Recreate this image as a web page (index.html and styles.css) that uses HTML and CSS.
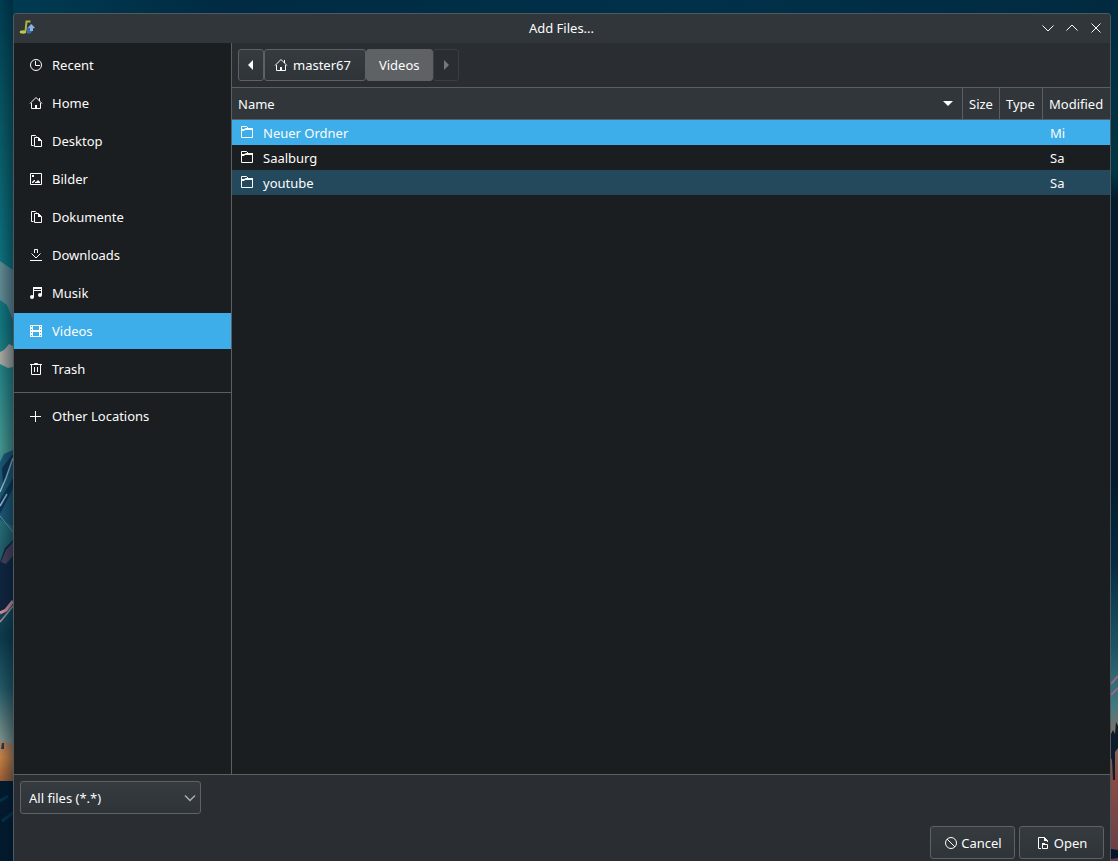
FILE: index.html
```html
<!DOCTYPE html>
<html lang="en">
<head>
<meta charset="utf-8">
<title>Add Files...</title>
<link rel="stylesheet" href="styles.css">
</head>
<body>
<svg class="wallpaper wallpaper-left" viewBox="0 0 13 861" preserveAspectRatio="none" aria-hidden="true">
  <defs>
    <linearGradient id="sky" x1="0" y1="0" x2="0" y2="1">
      <stop offset="0" stop-color="#003c52"/><stop offset=".12" stop-color="#07535f"/><stop offset=".3" stop-color="#0d6f7b"/>
      <stop offset=".38" stop-color="#12757d"/><stop offset=".52" stop-color="#44948c"/><stop offset=".56" stop-color="#2f7f86"/>
      <stop offset=".66" stop-color="#1d5664"/><stop offset=".74" stop-color="#0d3a4c"/><stop offset=".8" stop-color="#245965"/><stop offset=".86" stop-color="#7c918b"/>
    </linearGradient>
    <linearGradient id="shade" x1="0" y1="0" x2="1" y2="0">
      <stop offset="0" stop-color="#001522" stop-opacity="0"/><stop offset="1" stop-color="#001522" stop-opacity=".4"/>
    </linearGradient>
    <linearGradient id="sand" x1="0" y1="0" x2="0" y2="1">
      <stop offset="0" stop-color="#a87c62"/><stop offset=".4" stop-color="#c67f42"/><stop offset="1" stop-color="#9a5d38"/>
    </linearGradient>
  </defs>
  <path fill="url(#sky)" d="M0 0h13v861H0z"/>
  <path fill="#5f8790" d="M0 261l13 9v50l-6-15-7-5z"/>
  <path fill="#a6a5a0" d="M0 352l4-2 5-6 4 2v21l-5 1-8-4z"/>
  <path fill="#1b5672" d="M0 462l4-8 9-4v76l-13-6z"/>
  <path fill="#0b3355" d="M2 468l11-14v8L3 486zM0 500l13-22v10L0 514z"/>
  <path stroke="#94b5c2" stroke-width="1.5" fill="none" d="M0 492l6-14 7-20M0 506l7-12"/>
  <path stroke="#6197a0" fill="none" d="M0 516l13 16"/>
  <path fill="#10243f" d="M0 562l5-14 8-8v62l-13 12z"/>
  <path fill="#494059" d="M1 562l5-12 7-8v14l-7 8z"/>
  <path stroke="#d58f9e" stroke-width="3" fill="none" d="M0 613l6-3 7-9"/>
  <path stroke="#a991a0" stroke-width="1.5" fill="none" d="M0 622l5-6 8-10"/>
  <path fill="url(#sand)" d="M0 741l13 3v38H0z"/>
  <path fill="#22384b" d="M2 743h2v6H1z"/>
  <path fill="#031a2e" d="M0 781h13v80H0z"/>
  <path stroke="#07304b" stroke-width="3" fill="none" d="M0 801l8-5M2 821l11-8"/>
  <path fill="url(#shade)" d="M0 0h13v861H0z"/>
</svg>
<svg class="wallpaper wallpaper-right" viewBox="0 0 7 861" preserveAspectRatio="none" aria-hidden="true">
  <defs>
    <linearGradient id="dusk" x1="0" y1="0" x2="0" y2="1">
      <stop offset="0" stop-color="#012a40"/><stop offset=".2" stop-color="#013644"/><stop offset=".23" stop-color="#041b2c"/>
      <stop offset=".55" stop-color="#04192b"/><stop offset=".65" stop-color="#06293f"/><stop offset=".75" stop-color="#195465"/>
      <stop offset=".82" stop-color="#417a7f"/><stop offset=".85" stop-color="#7e7168"/><stop offset=".9" stop-color="#8a4d42"/><stop offset="1" stop-color="#693d48"/>
    </linearGradient>
  </defs>
  <path fill="url(#dusk)" d="M0 0h7v861H0z"/>
  <path stroke="#8c6c86" stroke-width="2" fill="none" d="M0 684l7-8M0 695l7-7"/>
  <path fill="#0e1b2b" d="M0 734l2-4 2 4 1-12 2 4v22l-3 4v28H2l-1-20-1-2z"/>
  <path fill="#07152a" d="M0 849l7 1v8l-7 1z"/>
</svg>

<main class="window">
  <header class="titlebar">
    <svg class="app-icon" viewBox="0 0 16 16" aria-hidden="true">
      <path fill="#3a69a5" d="M8 8l5-4 3 4-2 1-1 3-3 2-2-1z"/>
      <path fill="#8db2df" d="M9 8l3-4 4 4h-2v3h-3V8z"/>
      <path d="M11.500 1.500H7.500l-1 9.500" fill="none" stroke="#adb63d" stroke-width="2"/>
      <ellipse cx="4" cy="12" rx="3.300" ry="1.700" fill="#bdc64c"/>
    </svg>
    <h1 class="title">Add Files...</h1>
    <div class="window-controls">
      <button class="window-button" aria-label="Minimize"><svg viewBox="0 0 16 16"><path d="M2.500 5.500L8 11l5.500-5.500"/></svg></button>
      <button class="window-button" aria-label="Maximize"><svg viewBox="0 0 16 16"><path d="M2.500 10.500L8 5l5.500 5.500"/></svg></button>
      <button class="window-button" aria-label="Close"><svg viewBox="0 0 16 16"><path d="M3.500 3.500l9 9M12.500 3.500l-9 9"/></svg></button>
    </div>
  </header>

  <div class="browser">
    <nav class="places" aria-label="Places">
      <a class="place" href="#recent"><svg class="icon" viewBox="0 0 16 16"><circle cx="8" cy="8" r="5.500"/><path d="M7.500 4v4.500H12"/></svg>Recent</a>
      <a class="place" href="#home"><svg class="icon" viewBox="0 0 16 16"><path d="M2 8.500L8 2.500l6 6M3.500 8v5.500h9V8M11.500 3v3"/><path class="solid" d="M7 10h2v4H7z"/></svg>Home</a>
      <a class="place" href="#desktop"><svg class="icon" viewBox="0 0 16 16"><path d="M5.500 12.500h-2v-10h4l1 1M6.500 4.500h4l3 3v6h-7z"/><path class="solid" d="M10 4l4 4h-4z"/></svg>Desktop</a>
      <a class="place" href="#bilder"><svg class="icon" viewBox="0 0 16 16"><path d="M2.500 2.500h11v11h-11z"/><path class="solid" d="M4 4h2v2H4zM4 12v-1l2-2h1v1l-2 2zM7 12v-1h1l2-2 2 2v1z"/></svg>Bilder</a>
      <a class="place" href="#dokumente"><svg class="icon" viewBox="0 0 16 16"><path d="M5.500 12.500h-2v-10h4l1 1M6.500 4.500h4l3 3v6h-7z"/><path class="solid" d="M10 4l4 4h-4z"/></svg>Dokumente</a>
      <a class="place" href="#downloads"><svg class="icon" viewBox="0 0 16 16"><path d="M2 13.500h12M6.500 6V2.500h3V6M3.500 6.500L8 11l4.500-4.500"/></svg>Downloads</a>
      <a class="place" href="#musik"><svg class="icon" viewBox="0 0 16 16"><path d="M5.500 12V2.500h8V10M5.500 5.500h8"/><path class="solid" d="M5 2h9v2H5z"/><circle class="solid" cx="4" cy="12" r="2"/><circle class="solid" cx="12" cy="10" r="2"/></svg>Musik</a>
      <a class="place selected" href="#videos" aria-current="page"><svg class="icon" viewBox="0 0 16 16"><path class="solid" fill-rule="evenodd" d="M2 2h12v12H2zM5 3v4h6V3zM5 9v4h6V9zM3 3v1h1V3zM3 6v1h1V6zM3 9v1h1V9zM3 12v1h1v-1zM12 3v1h1V3zM12 6v1h1V6zM12 9v1h1V9zM12 12v1h1v-1z"/></svg>Videos</a>
      <a class="place" href="#trash"><svg class="icon" viewBox="0 0 16 16"><path d="M2 3.500h12M6.500 3V2.500h3V3M3.500 4v9.500h9V4M6.500 6v5M9.500 6v5"/></svg>Trash</a>
      <hr class="divider">
      <a class="place" href="#other"><svg class="icon" viewBox="0 0 16 16"><path d="M2 8.500h11M7.500 3v11"/></svg>Other Locations</a>
    </nav>

    <section class="content">
      <div class="pathbar">
        <button class="crumb arrow" aria-label="Back"><svg viewBox="0 0 16 16"><path class="solid" d="M10 3v10L5 8z"/></svg></button>
        <button class="crumb"><svg class="icon" viewBox="0 0 16 16"><path d="M2 8.500L8 2.500l6 6M3.500 8v5.500h9V8M11.500 3v3"/><path class="solid" d="M7 10h2v4H7z"/></svg>master67</button>
        <button class="crumb current">Videos</button>
        <button class="crumb arrow" aria-label="Forward" disabled><svg viewBox="0 0 16 16"><path class="solid" d="M6 3v10l5-5z"/></svg></button>
      </div>
      <table class="files">
        <colgroup><col><col class="col-size"><col class="col-type"><col class="col-modified"></colgroup>
        <thead>
          <tr>
            <th aria-sort="ascending"><span class="sort">Name<svg class="sort-icon" viewBox="0 0 16 16"><path class="solid" d="M3 5h10l-5 5z"/></svg></span></th>
            <th>Size</th><th>Type</th><th>Modified</th>
          </tr>
        </thead>
        <tbody>
          <tr class="selected"><td><span class="file"><svg class="icon" viewBox="0 0 16 16"><path d="M2.500 13.500v-11h5l2 2h4v9z"/><path class="solid" d="M2 5h3l2-1h7v2H6L5 7H2z"/></svg>Neuer Ordner</span></td><td></td><td></td><td>Mi</td></tr>
          <tr><td><span class="file"><svg class="icon" viewBox="0 0 16 16"><path d="M2.500 13.500v-11h5l2 2h4v9z"/><path class="solid" d="M2 5h3l2-1h7v2H6L5 7H2z"/></svg>Saalburg</span></td><td></td><td></td><td>Sa</td></tr>
          <tr class="hovered"><td><span class="file"><svg class="icon" viewBox="0 0 16 16"><path d="M2.500 13.500v-11h5l2 2h4v9z"/><path class="solid" d="M2 5h3l2-1h7v2H6L5 7H2z"/></svg>youtube</span></td><td></td><td></td><td>Sa</td></tr>
        </tbody>
      </table>
    </section>
  </div>

  <footer class="footer">
    <div class="filter">
      <select class="filter-select" aria-label="File type"><option>All files (*.*)</option></select>
      <svg class="filter-arrow" viewBox="0 0 16 16" aria-hidden="true"><path d="M3 5.500l5 5 5-5"/></svg>
    </div>
    <div class="actions">
      <button class="action"><svg class="icon" viewBox="0 0 16 16"><circle cx="8" cy="8" r="5.500"/><path d="M4 4l8 8"/></svg>Cancel</button>
      <button class="action"><svg class="icon" viewBox="0 0 16 16"><path d="M5 13.500H2.500v-11h6l3 3V7M6.500 9.500h5v4h-5z"/><path class="solid" d="M8 2l4 4H8zM6 8h3v2H6z"/></svg>Open</button>
    </div>
  </footer>
</main>
</body>
</html>
```

FILE: styles.css
```css
* { box-sizing: border-box; }

body {
  margin: 0;
  min-height: 100vh;
  padding: 13px 7px 0 13px;
  background: linear-gradient(90deg, #003c52, #002b42 20%, #003149 60%, #012a40);
  color: #fcfcfc;
  font: 13px/20px "Noto Sans", sans-serif;
}

button, select { font: inherit; color: inherit; }

svg { display: block; width: 16px; height: 16px; flex: none; fill: none; stroke: currentColor; }
.solid { fill: currentColor; stroke: none; }

.wallpaper { position: fixed; top: 0; height: 100%; stroke: none; }
.wallpaper-left { left: 0; width: 13px; }
.wallpaper-right { right: 0; width: 7px; }

.window {
  position: relative;
  display: flex;
  flex-direction: column;
  min-height: calc(100vh - 13px);
  border: 1px solid #50595f;
  border-bottom: 0;
  border-radius: 4px 4px 0 0;
  background: #2a2e32;
  overflow: hidden;
}

.titlebar {
  display: grid;
  grid-template-columns: 1fr auto 1fr;
  align-items: start;
  height: 29px;
  padding: 0 6px 0 5px;
  background: #31363b;
}
.app-icon { margin-top: 6px; stroke: none; }
.title { margin: 0; font-size: 13px; line-height: 28px; font-weight: 400; }
.window-controls { display: flex; justify-content: flex-end; gap: 8px; padding-top: 6px; }
.window-button { padding: 0; border: 0; background: none; }

.browser { flex: 1; display: flex; border-bottom: 1px solid #5b5f62; }

.places {
  display: flex;
  flex-direction: column;
  gap: 2px;
  width: 218px;
  padding-top: 4px;
  border-right: 1px solid #5b5f62;
  background: #1b1e20;
}
.place {
  display: flex;
  align-items: center;
  gap: 8px;
  height: 36px;
  padding: 0 14px;
  color: inherit;
  text-decoration: none;
}
.selected { background: #3daee9; }
.divider { width: 100%; margin: 3px 0; border: 0; border-top: 1px solid #5b5f62; }

.content { flex: 1; min-width: 0; background: #1b1e20; }

.pathbar { display: flex; padding: 6px; background: #2a2e32; }
.crumb, .action, .filter-select {
  display: flex;
  align-items: center;
  border: 1px solid #5f6265;
  border-radius: 3px;
  background: linear-gradient(#363b40, #2f3438);
}
.crumb { gap: 4px; height: 32px; padding: 0 14px 0 8px; }
.crumb.arrow { width: 26px; padding: 0; justify-content: center; }
.crumb.current { padding: 0 12px; background: #5f6265; }
.crumb:disabled { border-color: #3a3e42; background: none; color: #75797c; }

.files { width: 100%; table-layout: fixed; border-collapse: separate; border-spacing: 0; }
.col-size { width: 37px; }
.col-type { width: 43px; }
.col-modified { width: 68px; }
.files th {
  height: 33px;
  padding: 0 6px;
  border: solid #5b5f62;
  border-width: 1px 0 1px 1px;
  background: #31363b;
  font-weight: 400;
  text-align: left;
  white-space: nowrap;
}
.files th:first-child { border-left: 0; }
.files th:not(:first-child) { padding: 0 0 0 6px; }
.files td { padding: 1px 8px 0; line-height: 24px; }
.files td:first-child { padding-left: 7px; }
.sort { display: flex; align-items: center; justify-content: space-between; }
.file { display: flex; align-items: flex-start; gap: 8px; }
.file .icon { margin-top: 3px; }
.hovered { background: #24495c; }

.footer { display: flex; flex-direction: column; gap: 12px; padding: 6px 6px 2px; }
.filter { position: relative; width: 181px; }
.filter-select { appearance: none; width: 100%; height: 33px; padding: 0 24px 0 8px; }
.filter-arrow { position: absolute; right: 3px; top: 9px; color: #a9adb0; stroke-width: 1.5; pointer-events: none; }
.actions { display: flex; justify-content: flex-end; gap: 4px; }
.action { justify-content: center; width: 85px; height: 33px; padding: 0; gap: 2px; }
```
